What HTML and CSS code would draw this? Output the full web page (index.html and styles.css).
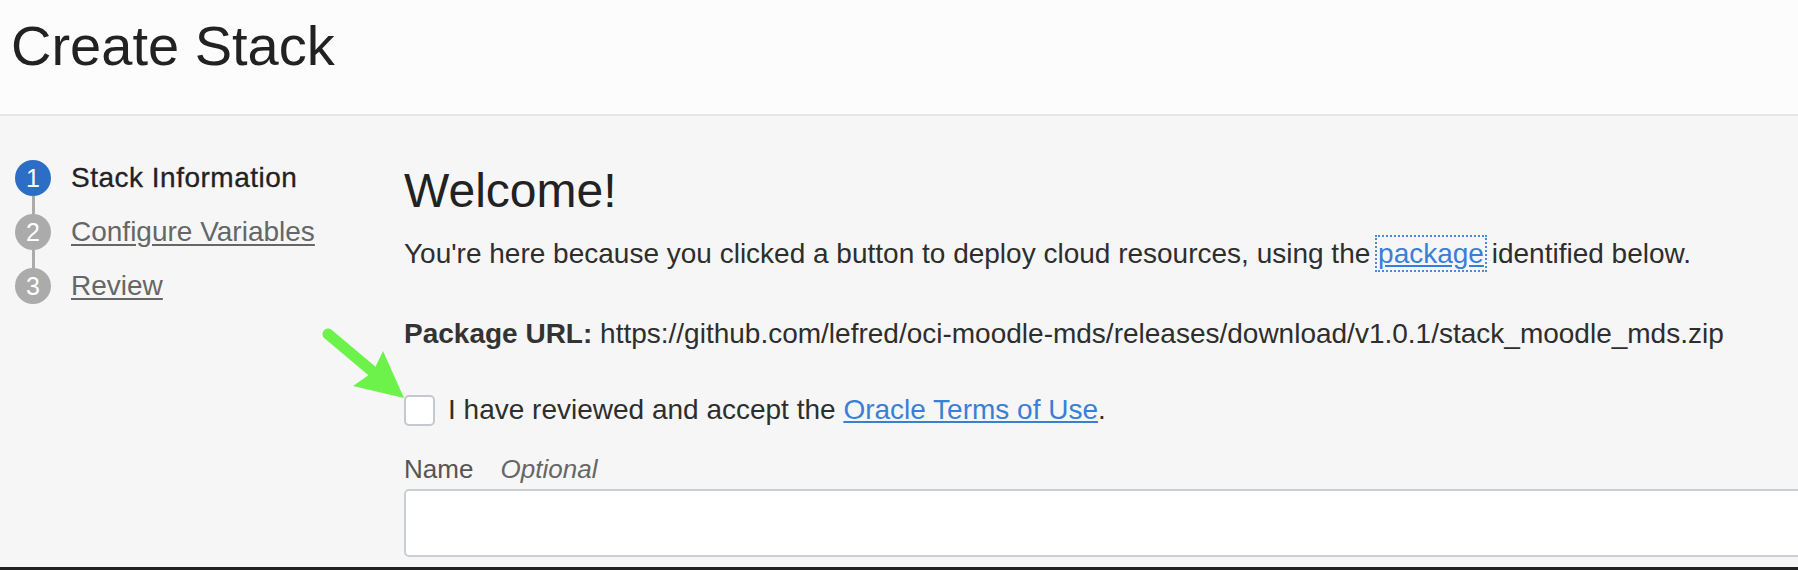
FILE: index.html
```html
<!DOCTYPE html>
<html lang="en">
<head>
<meta charset="utf-8">
<title>Create Stack</title>
<link rel="stylesheet" href="styles.css">
</head>
<body>
<header class="page-header">
  <h1 class="page-title">Create Stack</h1>
</header>
<div class="layout">
  <nav class="steps">
    <div class="step step-current">
      <span class="step-num">1</span>
      <span class="step-label">Stack Information</span>
    </div>
    <div class="step-connector"></div>
    <div class="step">
      <span class="step-num">2</span>
      <a class="step-label step-link" href="#">Configure Variables</a>
    </div>
    <div class="step-connector"></div>
    <div class="step">
      <span class="step-num">3</span>
      <a class="step-label step-link" href="#">Review</a>
    </div>
  </nav>
  <main class="content">
    <h2 class="welcome">Welcome!</h2>
    <p class="intro">You're here because you clicked a button to deploy cloud resources, using the <a class="link link-focus" href="#">package</a> identified below.</p>
    <p class="pkg"><strong>Package URL:</strong> https://github.com/lefred/oci-moodle-mds/releases/download/v1.0.1/stack_moodle_mds.zip</p>
    <label class="terms">
      <span class="checkbox"></span>
      <span>I have reviewed and accept the <a class="link" href="#">Oracle Terms of Use</a>.</span>
    </label>
    <div class="field-label">Name <em class="optional">Optional</em></div>
    <div class="text-input"></div>
  </main>
</div>
<div class="bottom-bar"></div>
<svg class="annotation-arrow" width="1798" height="570" viewBox="0 0 1798 570" aria-hidden="true">
  <line x1="328" y1="334" x2="372" y2="371" stroke="#6cf24a" stroke-width="11" stroke-linecap="round"/>
  <polygon points="404,398 353,386 373,372 383,351" fill="#6cf24a"/>
</svg>
</body>
</html>
```
FILE: styles.css
```css
html, body {
  margin: 0;
  padding: 0;
}
body {
  width: 1798px;
  height: 570px;
  overflow: hidden;
  background: #f6f6f6;
  font-family: "Liberation Sans", Arial, sans-serif;
  color: #2e2e2e;
  position: relative;
}
.page-header {
  background: #fcfcfc;
  height: 114px;
  border-bottom: 2px solid #e6e6e6;
  box-sizing: content-box;
}
.page-title {
  margin: 0;
  padding: 14px 0 0 11px;
  font-size: 56px;
  line-height: 64px;
  font-weight: normal;
  color: #222;
}
.layout {
  display: flex;
  height: 451px;
}
.steps {
  width: 404px;
  flex: none;
  padding: 44px 0 0 15px;
  box-sizing: border-box;
  display: flex;
  flex-direction: column;
}
.step {
  display: flex;
  align-items: center;
  gap: 20px;
  height: 36px;
}
.step-num {
  width: 36px;
  height: 36px;
  border-radius: 50%;
  background: #ababab;
  color: #fff;
  font-size: 25px;
  display: flex;
  align-items: center;
  justify-content: center;
  flex: none;
}
.step-current .step-num {
  background: #2c6ec6;
}
.step-connector {
  width: 3px;
  height: 18px;
  background: #ababab;
  margin-left: 16.5px;
}
.step-label {
  font-size: 28px;
  line-height: 36px;
  color: #222;
}
.step-current .step-label {
  letter-spacing: 0.5px;
  -webkit-text-stroke: 0.3px #222;
}
.step-link {
  color: #666;
  text-decoration: underline;
  text-underline-offset: 3px;
}
.content {
  flex: 1;
  padding-top: 47px;
  min-width: 0;
}
.welcome {
  margin: 0;
  font-size: 48px;
  line-height: 56px;
  font-weight: normal;
  color: #222;
}
.intro {
  margin: 17px 0 0;
  font-size: 28px;
  line-height: 36px;
  white-space: nowrap;
}
.link {
  color: #3a7fd6;
  text-decoration: underline;
}
.link-focus {
  outline: 2px dotted #4a8ad8;
  outline-offset: 1px;
}
.pkg {
  margin: 44px 0 0;
  font-size: 28px;
  line-height: 36px;
  white-space: nowrap;
}
.pkg strong {
  font-weight: bold;
  color: #333;
}
.terms {
  margin-top: 40px;
  display: flex;
  align-items: center;
  gap: 13px;
  font-size: 28px;
  line-height: 36px;
  white-space: nowrap;
}
.checkbox {
  width: 27px;
  height: 27px;
  border: 2px solid #c5c8cc;
  border-radius: 5px;
  background: #fff;
  flex: none;
}
.field-label {
  margin-top: 25px;
  font-size: 26px;
  line-height: 32px;
  color: #555;
}
.optional {
  margin-left: 20px;
  color: #666;
  font-style: italic;
}
.text-input {
  margin-top: 4px;
  width: 1440px;
  height: 64px;
  border: 2px solid #cbced2;
  border-radius: 5px;
  background: #fff;
}
.bottom-bar {
  height: 5px;
  background: #222;
}
.annotation-arrow {
  position: absolute;
  left: 0;
  top: 0;
  pointer-events: none;
}
```
